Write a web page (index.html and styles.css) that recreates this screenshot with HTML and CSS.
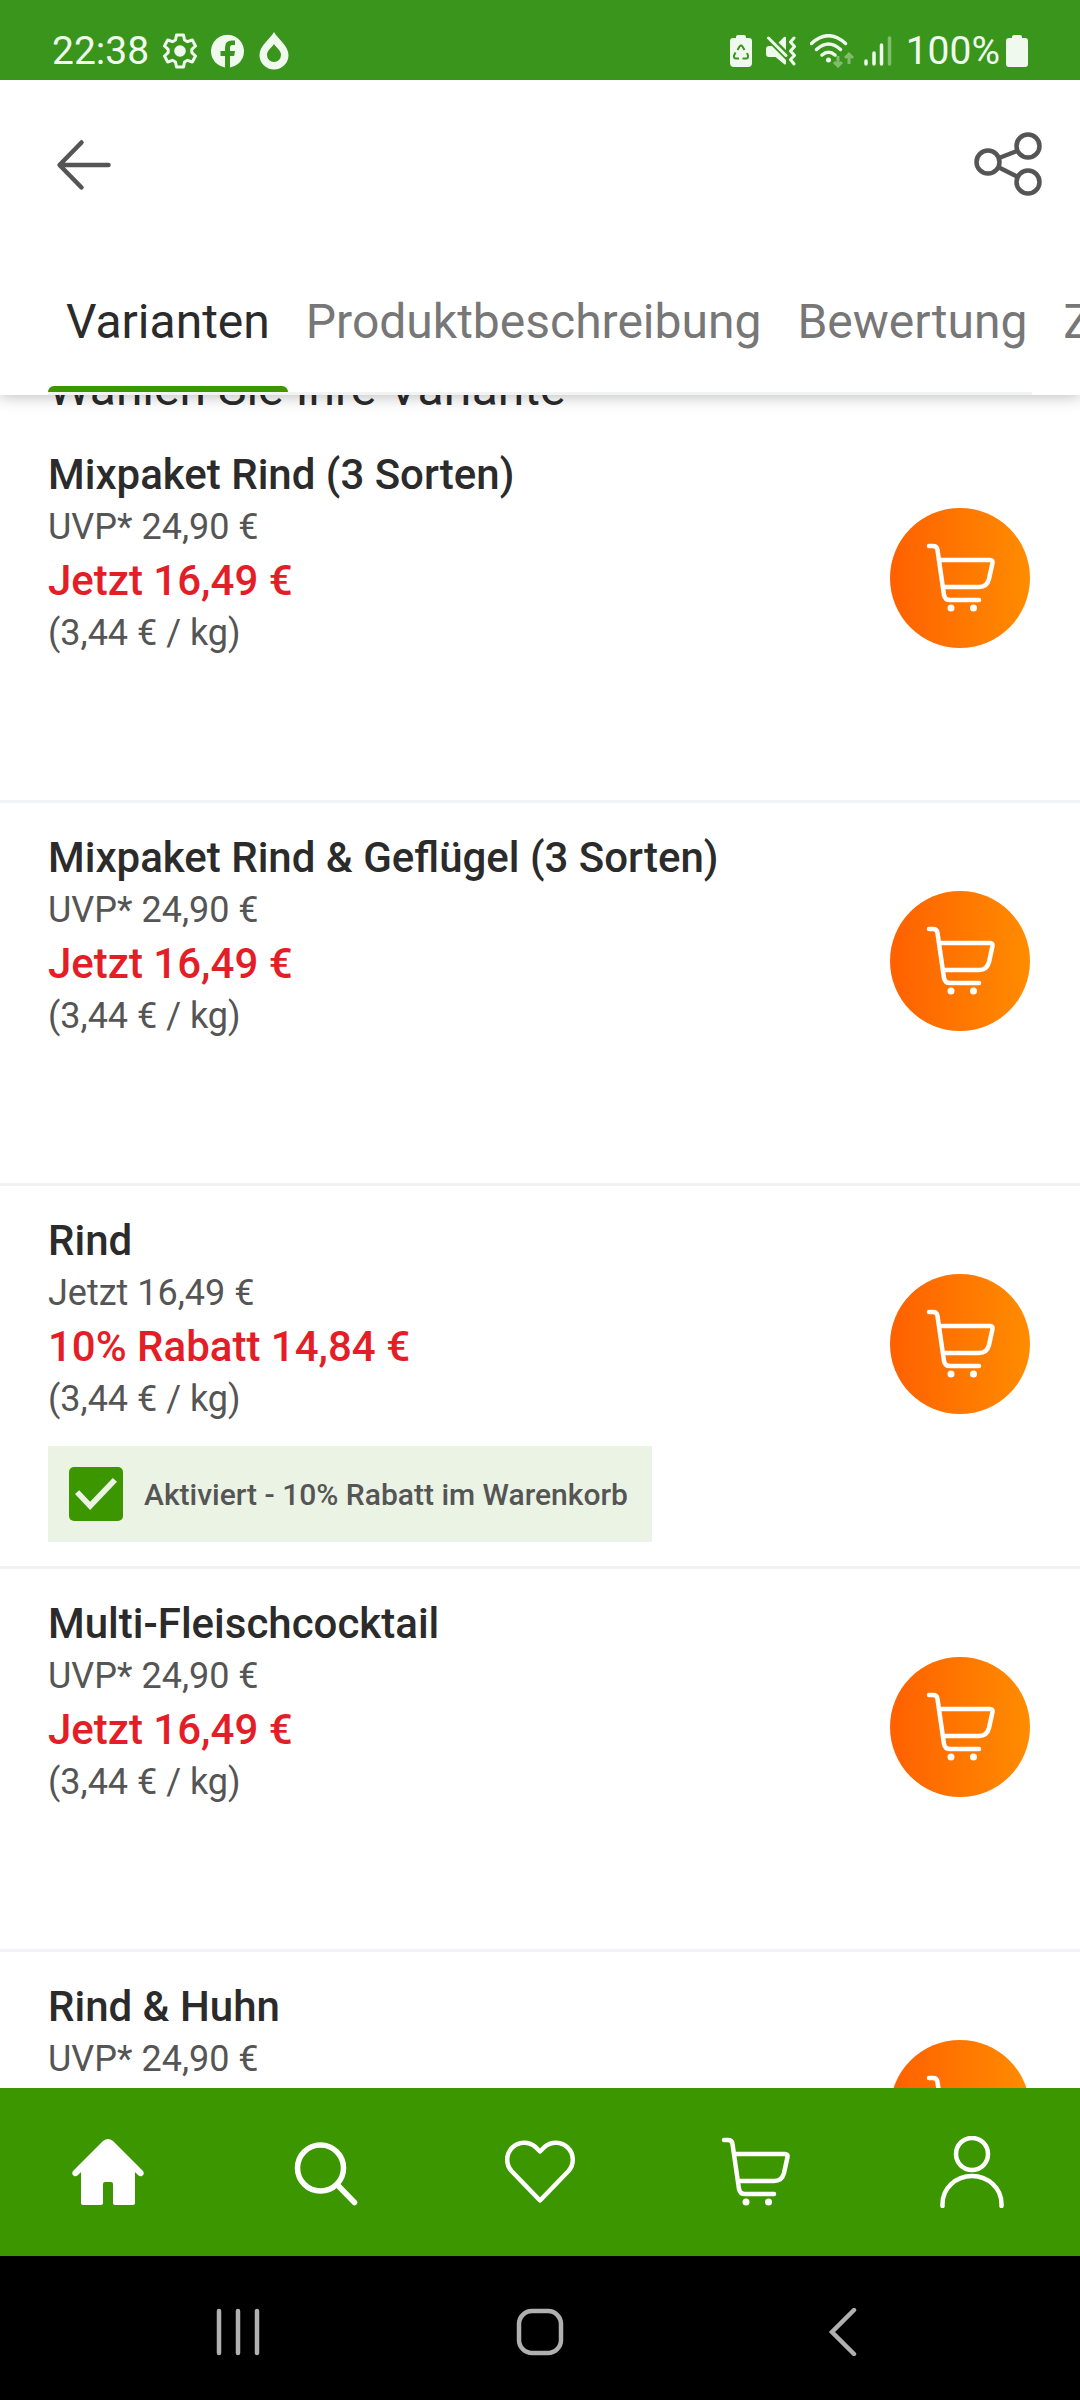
FILE: index.html
```html
<!DOCTYPE html>
<html lang="de">
<head>
<meta charset="utf-8">
<meta name="viewport" content="width=device-width, initial-scale=1">
<title>Varianten</title>
<link rel="stylesheet" href="styles.css">
</head>
<body>
<svg class="defs" aria-hidden="true">
  <symbol id="cart" viewBox="0 0 72 72">
    <path d="M4 4H8Q12 4 12.500 8L19 53Q20 58 25 58H54M14 18H65Q68 18 67.500 21L64 37Q62 45 54 45H18" fill="none" stroke="currentColor" stroke-width="4.500" stroke-linecap="round" stroke-linejoin="round"/>
    <circle cx="26" cy="66" r="3.500" fill="currentColor"/><circle cx="48.500" cy="66" r="3.500" fill="currentColor"/>
  </symbol>
</svg>
<div class="app">
  <div class="status">
    <div class="status-left">
      <span class="clock">22:38</span>
      <svg width="34" height="36" viewBox="0 0 34 36"><path d="M13.500 2h7l1 5 3 1.700 4.800-1.700 3.200 6-3.700 3.400v3.200l3.700 3.400-3.200 6-4.800-1.700-3 1.700-1 5h-7l-1-5-3-1.700L4.700 29l-3.200-6 3.700-3.400v-3.200L1.500 13l3.200-6 4.800 1.700 3-1.700z" fill="none" stroke="currentColor" stroke-width="3" stroke-linejoin="round"/><circle cx="17" cy="18" r="5.800" fill="currentColor"/></svg>
      <svg width="34" height="36" viewBox="0 0 34 36"><path d="M14 34.500V23H9.500V18H14V14.500Q14 7.500 21 7.500H24V12H21.500Q19 12 19 15V18H24L23.200 23H19V34.500A16.500 16.500 0 1 0 14 34.500Z" fill="currentColor"/></svg>
      <svg width="30" height="38" viewBox="0 0 30 38"><path fill-rule="evenodd" d="M15 0C19 7 29.500 14 29.500 23A14.500 14.500 0 0 1 .5 23C.5 14 11 7 15 0ZM15 12C12.500 16 8 18 8 23A7 7 0 0 0 22 23C22 18 17.500 16 15 12Z" fill="currentColor"/></svg>
    </div>
    <div class="status-right">
      <svg width="22" height="32" viewBox="0 0 22 32"><path d="M6 3V2Q6 0 8 0H14Q16 0 16 2V3H19Q22 3 22 6V28Q22 32 18 32H4Q0 32 0 28V6Q0 3 3 3Z" fill="currentColor"/><path d="M7.500 15 9.500 11.500Q11 9.500 12.500 11.500L14.500 15M17 18 18 20.500Q18.500 23.500 16 23.500H12.500M9 23.500H6Q3.500 23.500 4 20.500L5.500 17.500" fill="none" stroke="#39951b" stroke-width="2"/></svg>
      <svg class="mute" width="30" height="30" viewBox="0 0 30 30"><path d="M3 10H6L20 24V27Q20 29.500 18 28L9.500 21H3Q0 21 0 18V13Q0 10 3 10ZM12.500 6.500 18 1Q20 0 20 2V14Z" fill="currentColor"/><path d="M2.500 2 20 19.500" fill="none" stroke="currentColor" stroke-width="3" stroke-linecap="round"/><path d="M28 2 24.500 6 28.500 10.500 24.500 15 28.500 19.500 24.500 23.500 28 28" fill="none" stroke="currentColor" stroke-width="3" stroke-linecap="round" stroke-linejoin="round"/></svg>
      <svg class="wifi" width="44" height="34" viewBox="0 0 44 34"><path d="M1.500 9.500Q18.500-6 35.500 9.500M6.500 15.500Q18.500 4.500 30.500 15.500M12 21Q18.500 15.500 25 21" fill="none" stroke="currentColor" stroke-width="3.500" stroke-linecap="round"/><circle cx="18.500" cy="26" r="2.500" fill="currentColor"/><path d="M28 22V32M24 28 28 32 32 28M39 30V20M35 24 39 20 43 24" fill="none" stroke="currentColor" stroke-width="3" opacity=".4"/></svg>
      <svg width="28" height="30" viewBox="0 0 28 30"><path d="M2 25V28M10 17V28M17.500 9V28" stroke="currentColor" stroke-width="3.500" stroke-linecap="round"/><path d="M25.500 2V28" stroke="currentColor" stroke-width="3.500" stroke-linecap="round" opacity=".4"/></svg>
      <span class="battery">100%<svg width="22" height="32" viewBox="0 0 22 32"><path d="M6 3V2Q6 0 8 0H14Q16 0 16 2V3H19Q22 3 22 6V29Q22 32 19 32H3Q0 32 0 29V6Q0 3 3 3Z" fill="currentColor"/></svg></span>
    </div>
  </div>
  <header class="header">
    <div class="toolbar">
      <button class="icon-button" aria-label="Zurück"><svg width="72" height="72" viewBox="0 0 72 72"><path d="M60.500 37H12M33.500 14.500 11.500 37 33.500 59.500" fill="none" stroke="currentColor" stroke-width="4.500" stroke-linecap="round" stroke-linejoin="round"/></svg></button>
      <button class="icon-button" aria-label="Teilen"><svg width="72" height="72" viewBox="0 0 72 72"><g fill="none" stroke="currentColor" stroke-width="4.500"><circle cx="16" cy="34" r="11.500"/><circle cx="56" cy="18" r="11.500"/><circle cx="56" cy="54" r="11.500"/><path d="M27 30 45 23M26 39 46 49"/></g></svg></button>
    </div>
    <nav class="tabs">
      <a class="tab active" href="#varianten">Varianten</a>
      <a class="tab" href="#beschreibung">Produktbeschreibung</a>
      <a class="tab" href="#bewertung">Bewertung</a>
      <a class="tab" href="#zusatz">Zusatzinfos</a>
    </nav>
  </header>
  <main class="content" id="varianten">
    <h1 class="heading">Wählen Sie Ihre Variante</h1>
    <ul class="variants">
      <li class="variant">
        <div><h2 class="name">Mixpaket Rind (3 Sorten)</h2><p class="note">UVP* 24,90 €</p><p class="price">Jetzt 16,49 €</p><p class="note">(3,44 € / kg)</p></div>
        <button class="add" aria-label="In den Warenkorb"><svg width="72" height="72"><use href="#cart"/></svg></button>
      </li>
      <li class="variant">
        <div><h2 class="name">Mixpaket Rind &amp; Geflügel (3 Sorten)</h2><p class="note">UVP* 24,90 €</p><p class="price">Jetzt 16,49 €</p><p class="note">(3,44 € / kg)</p></div>
        <button class="add" aria-label="In den Warenkorb"><svg width="72" height="72"><use href="#cart"/></svg></button>
      </li>
      <li class="variant">
        <div><h2 class="name">Rind</h2><p class="note">Jetzt 16,49 €</p><p class="price">10% Rabatt 14,84 €</p><p class="note">(3,44 € / kg)</p>
          <label class="coupon"><input class="check" type="checkbox" checked>Aktiviert - 10% Rabatt im Warenkorb</label></div>
        <button class="add" aria-label="In den Warenkorb"><svg width="72" height="72"><use href="#cart"/></svg></button>
      </li>
      <li class="variant">
        <div><h2 class="name">Multi-Fleischcocktail</h2><p class="note">UVP* 24,90 €</p><p class="price">Jetzt 16,49 €</p><p class="note">(3,44 € / kg)</p></div>
        <button class="add" aria-label="In den Warenkorb"><svg width="72" height="72"><use href="#cart"/></svg></button>
      </li>
      <li class="variant">
        <div><h2 class="name">Rind &amp; Huhn</h2><p class="note">UVP* 24,90 €</p></div>
        <button class="add" aria-label="In den Warenkorb"><svg width="72" height="72"><use href="#cart"/></svg></button>
      </li>
    </ul>
  </main>
  <nav class="bottom-nav">
    <a href="#start" aria-label="Startseite"><svg width="72" height="72" viewBox="0 0 72 72"><path d="M31 5Q36 1 41 5L71 35Q73 38 70 40Q68 41 66 39L63 36V67Q63 69 61 69H43Q41 69 41 67V48Q41 46 39 46H33Q31 46 31 48V67Q31 69 29 69H11Q9 69 9 67V36L6 39Q4 41 2 40Q-1 38 1 35Z" fill="currentColor"/></svg></a>
    <a href="#suche" aria-label="Suche"><svg width="72" height="72" viewBox="0 0 72 72"><g fill="none" stroke="currentColor" stroke-width="5.500" stroke-linecap="round"><circle cx="32.500" cy="32" r="23"/><path d="M49.500 49 66.500 66.500"/></g></svg></a>
    <a href="#merkliste" aria-label="Merkliste"><svg width="72" height="72" viewBox="0 0 72 72"><path d="M36 15.500 31.500 11A17 17 0 0 0 7.500 35L36 64.500 64.500 35A17 17 0 0 0 40.500 11Z" fill="none" stroke="currentColor" stroke-width="4.500" stroke-linejoin="round"/></svg></a>
    <a href="#warenkorb" aria-label="Warenkorb"><svg width="72" height="72"><use href="#cart"/></svg></a>
    <a href="#konto" aria-label="Konto"><svg width="72" height="72" viewBox="0 0 72 72"><g fill="none" stroke="currentColor" stroke-width="4.500" stroke-linecap="round"><circle cx="36" cy="18" r="16"/><path d="M6.500 70V68A29.500 28 0 0 1 65.500 68V70"/></g></svg></a>
  </nav>
  <div class="system-nav">
    <button aria-label="Letzte Apps"><svg width="48" height="48" viewBox="0 0 48 48"><path d="M5 3V45M24 3V45M43 3V45" stroke="currentColor" stroke-width="4.500" stroke-linecap="round"/></svg></button>
    <button aria-label="Home"><svg width="48" height="48" viewBox="0 0 48 48"><rect x="3" y="3" width="42" height="42" rx="13" fill="none" stroke="currentColor" stroke-width="4.500"/></svg></button>
    <button aria-label="Zurück"><svg width="48" height="48" viewBox="0 0 48 48"><path d="M36 2 14 24 36 46" fill="none" stroke="currentColor" stroke-width="4.500" stroke-linecap="round"/></svg></button>
  </div>
</div>
</body>
</html>
```
FILE: styles.css
```css
* { box-sizing: border-box; margin: 0; padding: 0; }
body { background: #fff; color: #2b2b2b; font-family: Roboto, "Noto Sans", sans-serif; }
button { border: 0; background: none; color: inherit; font: inherit; }
a { color: inherit; text-decoration: none; }
svg { display: block; flex: none; }
.defs { position: absolute; width: 0; height: 0; }

.app { display: grid; grid-template-rows: auto auto 1fr auto auto; grid-template-columns: minmax(0, 1fr); height: 100vh; overflow: hidden; }

.status { position: relative; z-index: 1; display: flex; justify-content: space-between; padding: 22px 52px 0; height: 80px; background: #39951b; color: #f0f9ee; font-size: 39px; line-height: 58px; }
.status-left, .status-right, .battery { display: flex; align-items: center; }
.status-left { gap: 14px; }
.status-right { gap: 14px; }
.wifi { margin-right: -4px; }
.battery { gap: 6px; }

.header { position: relative; background: #fff; box-shadow: 0 2px 14px rgba(0, 0, 0, .25); }
.toolbar { display: flex; justify-content: space-between; padding: 48px 36px 46px 48px; color: #555; }
.tabs { display: flex; margin-left: 48px; overflow: hidden; background: linear-gradient(#f2f3f3, #f2f3f3) 0 100% / calc(100% - 48px) 3px no-repeat; }
.tab { flex: none; height: 149px; padding: 48px 18px 0; border-bottom: 3px solid transparent; font-size: 48px; line-height: 56px; color: #777; }
.active { position: relative; color: #2b2b2b; }
.active::after { content: ""; position: absolute; left: 0; right: 0; bottom: 0; height: 6px; border-radius: 6px 6px 0 0; background: #3c9600; }

.content { min-height: 0; overflow: hidden; }
.heading { margin: -34px 48px 3px; font-size: 48px; font-weight: 400; line-height: 56px; }
.variants { list-style: none; }
.variant { display: flex; justify-content: space-between; align-items: flex-start; min-height: 383px; padding: 28px 50px 24px 48px; border-bottom: 3px solid #f2f3f4; line-height: 53px; }
.name { font-size: 42px; font-weight: 500; }
.note { font-size: 36px; color: #555; }
.price { font-size: 42px; font-weight: 500; color: #e31e26; }
.add { display: grid; place-items: center; width: 140px; height: 140px; margin-top: 60px; padding-left: 2px; border-radius: 50%; background: linear-gradient(90deg, #ff6000, #ff8c00); color: #fff; }
.coupon { display: flex; align-items: center; gap: 21px; height: 96px; margin-top: 20px; padding: 0 24px 0 21px; background: #eaf3e4; color: #555; font-size: 30px; font-weight: 500; }
.check { appearance: none; display: grid; place-items: center; width: 54px; height: 54px; border-radius: 5px; background: #3c9600; }
.check::before { content: ""; width: 42px; height: 32px; background: #eaf3e4; clip-path: polygon(0 50%, 10% 38%, 36% 74%, 90% 0, 100% 12%, 36% 100%); }

.bottom-nav { display: grid; grid-template-columns: repeat(5, 1fr); place-items: center; height: 168px; background: #3c9600; color: #fff; }
.system-nav { display: grid; grid-template-columns: repeat(3, 1fr); place-items: center; height: 144px; padding: 8px 87px 0; background: #000; color: #b0b0b0; }
```
